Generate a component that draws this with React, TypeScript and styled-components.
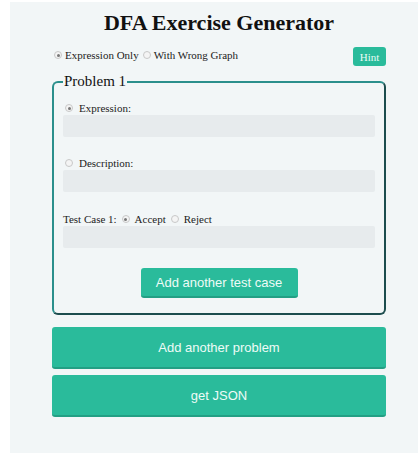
import React, { useState } from 'react'
import styled, { createGlobalStyle } from 'styled-components'

const GlobalStyle = createGlobalStyle`
    html, body {
        margin: 0;
        padding: 0;
        background: #ffffff;
    }
    body {
        font-family: "Liberation Serif", "Times New Roman", serif;
        color: #222;
    }
`

const Page = styled.div`
    margin: 2px 0 0 10px;
    min-height: 451px;
    background: #f2f6f7;
    padding: 9px 32px 0 42px;
    box-sizing: border-box;
`

const Title = styled.h1`
    margin: 0;
    font-size: 22px;
    font-weight: bold;
    text-align: center;
    line-height: 24px;
    color: #111;
`

const ModeRow = styled.div`
    display: flex;
    align-items: center;
    justify-content: space-between;
    margin-top: 9px;
    height: 22px;
`

const RadioGroup = styled.div`
    display: flex;
    align-items: center;
    gap: 4px;
    padding-left: 2px;
`

const Option = styled.label`
    display: inline-flex;
    align-items: center;
    gap: 3px;
    font-size: 11px;
    color: #222;
`

const Radio = styled.input.attrs({ type: 'radio' })`
    appearance: none;
    margin: 0;
    width: 8px;
    height: 8px;
    border-radius: 50%;
    border: 1px solid #c8c8c8;
    background: #f4f4f4;
    box-sizing: border-box;
    position: relative;
    &:checked::after {
        content: '';
        position: absolute;
        left: 1.5px;
        top: 1.5px;
        width: 3px;
        height: 3px;
        border-radius: 50%;
        background: #777;
    }
`

const HintButton = styled.button`
    font-family: "Liberation Serif", "Times New Roman", serif;
    font-size: 11px;
    color: #e9fbf6;
    background: #2abb9b;
    border: none;
    border-radius: 3px;
    padding: 0;
    width: 33px;
    height: 19px;
    margin-top: 3px;
`

const Problem = styled.fieldset`
    margin: 7px 0 0 0;
    padding: 3px 9px 15px 9px;
    border: 2px solid;
    border-color: #2b8f8c #1d4d4e #1d4d4e #2b8f8c;
    border-radius: 6px;
`

const Legend = styled.legend`
    font-size: 15px;
    padding: 0 1px;
    margin-left: 0;
    color: #111;
`

const Field = styled.div<{ gap: number }>`
    margin-top: ${p => p.gap}px;
`

const FieldLabel = styled.div`
    display: flex;
    align-items: center;
    gap: 6px;
    font-size: 11px;
    height: 12px;
    padding-left: 2px;
`

const TestLabel = styled(FieldLabel)`
    gap: 5px;
    padding-left: 0;
`

const TextBox = styled.input`
    display: block;
    width: 100%;
    height: 22px;
    margin-top: 1px;
    border: none;
    border-radius: 2px;
    background: #e7ebed;
    box-sizing: border-box;
    outline: none;
`

const Center = styled.div`
    display: flex;
    justify-content: center;
    margin-top: 20px;
`

const ActionButton = styled.button<{ wide?: boolean }>`
    font-family: "Liberation Sans", Arial, sans-serif;
    font-size: 13px;
    color: #eefbf7;
    background: #2abb9b;
    border: none;
    border-bottom: 2px solid #239f84;
    border-radius: 3px;
    width: ${p => (p.wide ? '100%' : '157px')};
    height: ${p => (p.wide ? '42px' : '30px')};
    padding: 0;
    display: block;
`

const BottomButtons = styled.div`
    display: flex;
    flex-direction: column;
    gap: 6px;
    margin-top: 12px;
`

export default function App() {
    const [mode, setMode] = useState('expression')
    const [source, setSource] = useState('expression')
    const [verdict, setVerdict] = useState('accept')

    return (
        <>
            <GlobalStyle />
            <Page>
                <Title>DFA Exercise Generator</Title>
                <ModeRow>
                    <RadioGroup>
                        <Option>
                            <Radio name="mode" checked={mode === 'expression'} onChange={() => setMode('expression')} />
                            Expression Only
                        </Option>
                        <Option>
                            <Radio name="mode" checked={mode === 'graph'} onChange={() => setMode('graph')} />
                            With Wrong Graph
                        </Option>
                    </RadioGroup>
                    <HintButton>Hint</HintButton>
                </ModeRow>
                <Problem>
                    <Legend>Problem 1</Legend>
                    <Field gap={9}>
                        <FieldLabel>
                            <Radio name="src" checked={source === 'expression'} onChange={() => setSource('expression')} />
                            Expression:
                        </FieldLabel>
                        <TextBox />
                    </Field>
                    <Field gap={20}>
                        <FieldLabel>
                            <Radio name="src" checked={source === 'description'} onChange={() => setSource('description')} />
                            Description:
                        </FieldLabel>
                        <TextBox />
                    </Field>
                    <Field gap={21}>
                        <TestLabel>
                            Test Case 1:
                            <Radio name="verdict" checked={verdict === 'accept'} onChange={() => setVerdict('accept')} />
                            Accept
                            <Radio name="verdict" checked={verdict === 'reject'} onChange={() => setVerdict('reject')} />
                            Reject
                        </TestLabel>
                        <TextBox />
                    </Field>
                    <Center>
                        <ActionButton>Add another test case</ActionButton>
                    </Center>
                </Problem>
                <BottomButtons>
                    <ActionButton wide>Add another problem</ActionButton>
                    <ActionButton wide>get JSON</ActionButton>
                </BottomButtons>
            </Page>
        </>
    )
}
